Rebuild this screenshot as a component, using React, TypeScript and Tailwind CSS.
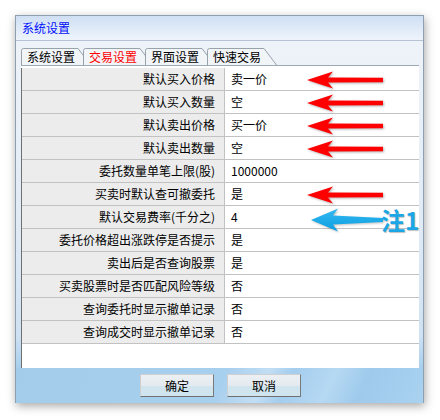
import React from "react";

// 设置行数据：label 为左侧说明，value 为右侧当前值，mark 为标注箭头
type Mark = "red" | "blue" | undefined;

interface Row {
  label: string;
  value: string;
  mark?: Mark;
}

const ROWS: Row[] = [
  { label: "默认买入价格", value: "卖一价", mark: "red" },
  { label: "默认买入数量", value: "空", mark: "red" },
  { label: "默认卖出价格", value: "买一价", mark: "red" },
  { label: "默认卖出数量", value: "空", mark: "red" },
  { label: "委托数量单笔上限(股)", value: "1000000" },
  { label: "买卖时默认查可撤委托", value: "是", mark: "red" },
  { label: "默认交易费率(千分之)", value: "4", mark: "blue" },
  { label: "委托价格超出涨跌停是否提示", value: "是" },
  { label: "卖出后是否查询股票", value: "是" },
  { label: "买卖股票时是否匹配风险等级", value: "否" },
  { label: "查询委托时显示撤单记录", value: "否" },
  { label: "查询成交时显示撤单记录", value: "否" },
];

const TABS = ["系统设置", "交易设置", "界面设置", "快速交易"];
const ACTIVE_TAB = 1;

function Tab({ label, active, first }: { label: string; active: boolean; first: boolean }) {
  return (
    <div className={`relative h-[17px] w-[70px] shrink-0 ${first ? "" : "-ml-[8px]"}`}>
      <svg className="absolute inset-0" width="70" height="17" viewBox="0 0 70 17">
        <path
          d="M0.5 17 L0.5 2.5 Q0.5 0.5 2.5 0.5 L57 0.5 L69.5 17"
          fill="#f2f5f8"
          stroke="#97a2ad"
          strokeWidth="1"
        />
      </svg>
      <span
        className={`relative block pl-[6px] text-[12px] leading-[18px] ${active ? "text-[#ff0000]" : "text-black"}`}
      >
        {label}
      </span>
    </div>
  );
}

function RedArrow() {
  return (
    <svg
      className="absolute left-[82px] top-[3px] z-10 drop-shadow-[1px_1px_1px_rgba(0,0,0,0.3)]"
      width="76"
      height="18"
      viewBox="0 0 76 18"
    >
      <path d="M0 9 L26 0.5 L21 6.6 L76 6.8 L76 11.2 L21 11.4 L26 17.5 Z" fill="#ff0000" />
    </svg>
  );
}

function BlueNote() {
  return (
    <>
      <svg
        className="absolute left-[86px] top-[2px] z-10 drop-shadow-[1px_1px_1px_rgba(0,0,0,0.25)]"
        width="72"
        height="24"
        viewBox="0 0 72 24"
      >
        <defs>
          <linearGradient id="blueArrow" x1="0" y1="0" x2="0" y2="1">
            <stop offset="0" stopColor="#35b8f0" />
            <stop offset="1" stopColor="#0a9fe2" />
          </linearGradient>
        </defs>
        <path d="M0 12 L27 0.5 L22 7.5 L72 10 L72 14 L22 16.5 L27 23.5 Z" fill="url(#blueArrow)" />
      </svg>
      <span className="absolute left-[156px] top-[1px] z-10 whitespace-nowrap text-[24px] font-bold leading-[26px] text-[#1ca6e6] [text-shadow:1px_1px_1px_rgba(0,0,0,0.25)]">
        注1
      </span>
    </>
  );
}

export default function App() {
  return (
    <div
      className="h-[420px] w-[440px] overflow-hidden bg-white p-[15px]"
      style={{ fontFamily: '"Noto Sans CJK SC", "Liberation Sans", sans-serif' }}
    >
      {/* 对话框窗口 */}
      <div className="flex h-[388px] w-[409px] flex-col border border-[#8e9fb2] shadow-[1px_3px_9px_rgba(0,0,0,0.35)]">
        {/* 标题栏 */}
        <div className="flex h-[25px] shrink-0 items-center border-b border-[#b4c3d4] bg-[linear-gradient(180deg,#cfdff4_0%,#e2ecf8_60%,#edf3fb_100%)] pl-[6px]">
          <span className="text-[12px] text-[#0010ff]">系统设置</span>
        </div>

        {/* 主体 */}
        <div className="flex flex-1 flex-col bg-[linear-gradient(180deg,#eef3f9_0%,#e1ebf6_55%,#cfe2f3_90%,#a8cfed_100%)] pl-[5px] pr-[4px] pt-[7px]">
          {/* 标签页 */}
          <div className="flex h-[17px] items-end">
            {TABS.map((t, i) => (
              <Tab key={t} label={t} active={i === ACTIVE_TAB} first={i === 0} />
            ))}
          </div>

          {/* 设置表格 */}
          <div className="flex h-[303px] flex-col border-t border-[#9ea8b2] bg-white pt-[2px]">
            <div className="flex flex-1 flex-col border-l border-[#707070]">
              {ROWS.map((row) => (
                <div key={row.label} className="flex h-[23px] border-b border-[#c2c2c2] text-[12px] text-black">
                  <div className="flex w-[203px] items-center justify-end border-r border-[#c2c2c2] bg-[#ececec] pr-[9px]">
                    {row.label}
                  </div>
                  <div className="relative flex flex-1 items-center pl-[6px]">
                    {row.value}
                    {row.mark === "red" && <RedArrow />}
                    {row.mark === "blue" && <BlueNote />}
                  </div>
                </div>
              ))}
            </div>
          </div>
        </div>

        {/* 按钮栏 */}
        <div className="flex h-[35px] shrink-0 justify-center gap-[13px] bg-[linear-gradient(115deg,#a3cbea_0%,#a7cfee_50%,#c2def4_60%,#a4cdee_66%,#b6d9f3_76%,#9fcaec_84%,#a9d2f0_100%)] pl-[2px] pt-[6px]">
          <button className="h-[23px] w-[74px] border border-[#cfcfcf] border-b-[#6f6f6f] border-r-[#7a7a7a] bg-[linear-gradient(180deg,#ecf0f4_0%,#e4eaf0_50%,#d2e5ee_51%,#cfe4ee_100%)] text-[12px] text-black">
            确定
          </button>
          <button className="h-[23px] w-[74px] border border-[#cfcfcf] border-b-[#6f6f6f] border-r-[#7a7a7a] bg-[linear-gradient(180deg,#ecf0f4_0%,#e4eaf0_50%,#d2e5ee_51%,#cfe4ee_100%)] text-[12px] text-black">
            取消
          </button>
        </div>
      </div>
    </div>
  );
}
